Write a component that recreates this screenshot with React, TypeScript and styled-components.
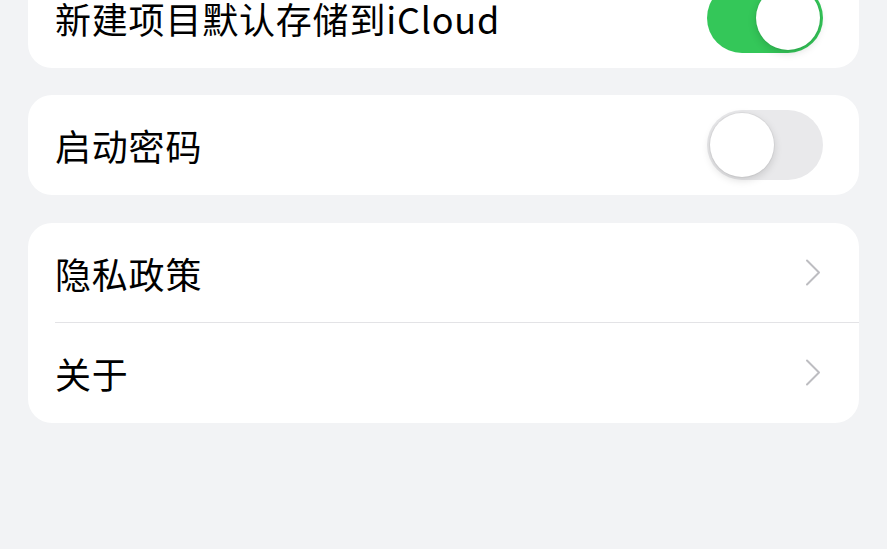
import React from "react";
import styled, { createGlobalStyle } from "styled-components";

const Global = createGlobalStyle`
  html, body { margin: 0; padding: 0; background: #f2f3f5; }
  body { font-family: "Noto Sans CJK SC", "Noto Sans", sans-serif; overflow: hidden; }
`;

const Page = styled.div`
  width: 887px;
  height: 549px;
  background: #f2f3f5;
  display: flex;
  flex-direction: column;
  gap: 27px;
  padding: 0 28px;
  box-sizing: border-box;
  overflow: hidden;
`;

const Card = styled.div<{ $shift?: number }>`
  background: #ffffff;
  border-radius: 24px;
  display: flex;
  flex-direction: column;
  padding-left: 27px;
  margin-top: ${(p) => p.$shift ?? 0}px;
`;

const Row = styled.div<{ $divider?: boolean }>`
  height: 100px;
  box-sizing: border-box;
  display: flex;
  align-items: center;
  justify-content: space-between;
  padding-right: 36px;
  border-bottom: ${(p) => (p.$divider ? "1px solid #e3e3e6" : "none")};
`;

const Label = styled.span`
  font-size: 36px;
  color: #000;
  letter-spacing: 0.8px;
  line-height: 1;
`;

const Track = styled.div<{ $on: boolean }>`
  width: 116px;
  height: 70px;
  border-radius: 35px;
  background: ${(p) => (p.$on ? "#34c759" : "#e9e9eb")};
  display: flex;
  align-items: center;
  justify-content: ${(p) => (p.$on ? "flex-end" : "flex-start")};
  padding: 3px;
  box-sizing: border-box;
`;

const Knob = styled.div`
  width: 64px;
  height: 64px;
  border-radius: 50%;
  background: #fff;
  box-shadow: 0 3px 8px rgba(0, 0, 0, 0.15), 0 0 0 1px rgba(0, 0, 0, 0.04);
`;

const Toggle = ({ on }: { on: boolean }) => (
  <Track $on={on}>
    <Knob />
  </Track>
);

const Chevron = () => (
  <svg width="18" height="28" viewBox="0 0 18 28" style={{ marginRight: 0 }}>
    <path d="M2 1.5 L14 13.5 L2 25.5" fill="none" stroke="#bdbdc1" strokeWidth="2" strokeLinecap="round" strokeLinejoin="round" />
  </svg>
);

export default function App() {
  return (
    <>
      <Global />
      <Page>
        <Card $shift={-32}>
          <Row>
            <Label>新建项目默认存储到iCloud</Label>
            <Toggle on />
          </Row>
        </Card>
        <Card>
          <Row>
            <Label>启动密码</Label>
            <Toggle on={false} />
          </Row>
        </Card>
        <Card $shift={1}>
          <Row $divider>
            <Label>隐私政策</Label>
            <Chevron />
          </Row>
          <Row>
            <Label>关于</Label>
            <Chevron />
          </Row>
        </Card>
      </Page>
    </>
  );
}
